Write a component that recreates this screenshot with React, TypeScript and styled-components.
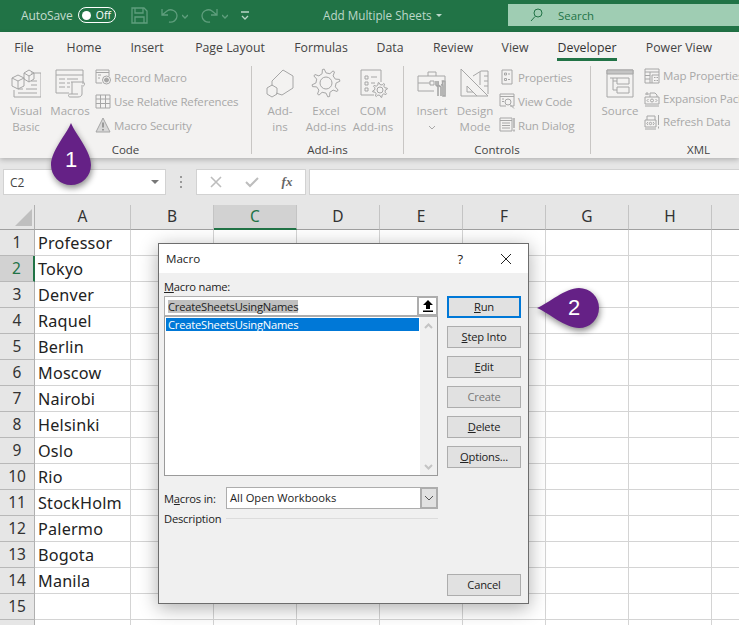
import React from 'react';
import styled, { createGlobalStyle } from 'styled-components';

const Global = createGlobalStyle`
  html, body { margin: 0; padding: 0; width: 739px; height: 625px; overflow: hidden; background: #fff; }
  * { box-sizing: border-box; }
`;
const UI = `"Open Sans", "Noto Sans", sans-serif`;
const GREEN = '#217346';

const Page = styled.div`position: relative; width: 739px; height: 625px; overflow: hidden; background: #fff; font-family: ${UI};`;

/* title bar */
const TitleBar = styled.div`height: 32px; background: ${GREEN}; display: flex; align-items: center; padding: 0 0 2px 21px;`;
const AutoSave = styled.span`font-size: 12px; color: #c3dccf; width: 57px; flex: none; white-space: nowrap; letter-spacing: -.1px;`;
const Toggle = styled.div`width: 38px; height: 16px; flex: none; border: 1.5px solid #fff; border-radius: 8px; display: flex; align-items: center; padding: 0 4px 0 3px; justify-content: space-between; margin-right: 15px;`;
const ToggleDot = styled.i`width: 9px; height: 9px; border-radius: 50%; background: #fff;`;
const ToggleText = styled.span`font-size: 10.5px; color: #fff;`;
const QuickIcon = styled.svg<{ $ml?: number }>`margin-left: ${p => p.$ml ?? 0}px; flex: none; fill: none; stroke: #5f9e7d; stroke-width: 1.3;`;
const DocTitle = styled.span`margin-left: 74px; width: 107px; flex: none; white-space: nowrap; font-size: 11.7px; color: #bcd8c9;`;
const SearchBox = styled.div`margin-left: 66px; width: 240px; height: 22px; background: #9fcdb3; display: flex; align-items: center; padding-left: 22px; flex: none;`;
const SearchText = styled.span`margin-left: 15px; font-size: 11.4px; color: ${GREEN};`;

/* ribbon */
const Ribbon = styled.div`position: relative; z-index: 2; background: #f3f2f1; box-shadow: 0 2px 5px rgba(0,0,0,.22); height: 126px;`;
const Tabs = styled.div`display: flex; height: 32px;`;
const Tab = styled.div<{ $w: number }>`width: ${p => p.$w}px; flex: none; text-align: center; padding-top: 7px; font-size: 12.3px; color: #444;`;
const TabLabel = styled.span<{ $on?: boolean }>`display: inline-block; line-height: 16px; padding: 0 1px 2px; border-bottom: 3px solid ${p => p.$on ? GREEN : 'transparent'}; color: ${p => p.$on ? '#333' : '#444'};`;
const RibbonBody = styled.div`display: flex; height: 94px; overflow: hidden;`;
const Group = styled.div<{ $w: number }>`width: ${p => p.$w}px; flex: none; height: 88px; margin-top: 2px; border-right: 1px solid #c8c6c4; display: flex; flex-direction: column;`;
const GroupBody = styled.div<{ $pl: number }>`height: 76px; display: flex; padding-left: ${p => p.$pl}px;`;
const GroupLabel = styled.div`font-size: 11.5px; line-height: 16px; height: 16px; margin-bottom: -4px; text-align: center; color: #444;`;
const Large = styled.div<{ $w: number }>`width: ${p => p.$w}px; flex: none; display: flex; flex-direction: column; align-items: center; font-size: 11.5px; line-height: 16px; color: #a8a8a8; text-align: center;`;
const LargeIcon = styled.div`height: 37px; padding-top: 2px;`;
const Chevron = styled.svg`fill: none; stroke: #a8a8a8; stroke-width: 1;`;
const SmallCol = styled.div<{ $ml: number; $tight?: boolean }>`margin-left: ${p => p.$ml}px; margin-top: ${p => p.$tight ? -2 : -1}px; display: flex; flex-direction: column;`;
const SmallRow = styled.div<{ $tight?: boolean }>`height: ${p => p.$tight ? 23 : 24}px; display: flex; align-items: center; gap: 3px; font-size: 11.5px; letter-spacing: -.15px; color: #a8a8a8; white-space: nowrap;`;
const Ic = styled.svg`flex: none; display: block; fill: none; stroke: #a6a6a6; stroke-width: 1;`;

/* formula bar */
const FormulaBar = styled.div`height: 47px; background: #e6e6e6; display: flex; padding: 11px 0 0 3px;`;
const NameBox = styled.div`width: 163px; height: 26px; background: #fff; border: 1px solid #d2d2d2; display: flex; align-items: center; justify-content: space-between; padding: 0 6px; font-size: 12px; color: #444; font-family: ${UI};`;
const Arrow = styled.i`width: 0; height: 0; border-left: 4px solid transparent; border-right: 4px solid transparent; border-top: 4px solid #777;`;
const Dots = styled.div`width: 30px; display: flex; flex-direction: column; align-items: center; justify-content: center; gap: 3px; height: 26px;`;
const Dot = styled.i`width: 2px; height: 2px; background: #999;`;
const FxBox = styled.div`width: 110px; height: 26px; background: #fff; border: 1px solid #d2d2d2; display: flex; align-items: center; justify-content: space-around; padding: 0 1px; margin-right: 3px;`;
const FxText = styled.span`font-family: "Liberation Serif", serif; font-style: italic; font-weight: bold; font-size: 13px; color: #666;`;
const FormulaInput = styled.div`flex: 1; height: 26px; background: #fff; border: 1px solid #d2d2d2; border-right: none;`;

/* sheet */
const Sheet = styled.div`display: grid; grid-template-columns: 35px 96px repeat(8, 83px); grid-auto-rows: 26px; font-family: "Noto Sans", sans-serif;`;
const Corner = styled.div`height: 25px; background: #e6e6e6; border-right: 1px solid #b0b0b0; border-bottom: 1px solid #a0a0a0; padding: 4px 0 0 15px;`;
const ColHead = styled.div<{ $on?: boolean }>`height: 25px; background: ${p => p.$on ? '#d2d2d2' : '#e6e6e6'}; border-right: 1px solid #c4c4c4; border-bottom: ${p => p.$on ? `2px solid ${GREEN}` : '1px solid #a0a0a0'}; text-align: center; font-size: 15.5px; line-height: 23px; color: ${p => p.$on ? GREEN : '#333'};`;
const RowHead = styled.div<{ $on?: boolean }>`margin-top: -1px; height: 26px; background: ${p => p.$on ? '#d2d2d2' : '#e6e6e6'}; border-right: ${p => p.$on ? `2px solid ${GREEN}` : '1px solid #b0b0b0'}; border-bottom: 1px solid #b8b8b8; text-align: center; font-size: 15.5px; line-height: 25px; color: ${p => p.$on ? GREEN : '#333'};`;
const Cell = styled.div`margin-top: -1px; height: 26px; background: #fff; border-right: 1px solid #d4d4d4; border-bottom: 1px solid #d4d4d4; padding-left: 3px; font-size: 16.2px; letter-spacing: .2px; line-height: 26px; color: #222; white-space: nowrap; overflow: hidden;`;

/* dialog */
const Dialog = styled.div`position: absolute; z-index: 3; left: 158px; top: 243px; width: 371px; height: 361px; border: 1px solid #6d6d6d; background: #f0f0f0; box-shadow: 0 4px 18px rgba(0,0,0,.32); display: flex; flex-direction: column; font-size: 11.2px; letter-spacing: -.22px; color: #222;`;
const DialogTitle = styled.div`height: 29px; background: #fff; display: flex; align-items: center; padding: 0 16px 0 7px; flex: none;`;
const DialogName = styled.span`flex: 1; font-size: 11.6px; letter-spacing: 0;`;
const Help = styled.span`font-size: 13px; margin-right: 37px;`;
const DialogBody = styled.div`flex: 1; display: grid; grid-template-columns: 274px 74px; column-gap: 9px; padding: 7px 0 7px 5px;`;
const LeftCol = styled.div`display: flex; flex-direction: column;`;
const FieldLabel = styled.div`height: 16px; line-height: 14px;`;
const NameField = styled.div`height: 20px; background: #fff; border: 1px solid #adadad; display: flex; align-items: center; justify-content: space-between; padding-left: 3px;`;
const Selected = styled.span`background: #c0c0c0; line-height: 13px; white-space: nowrap;`;
const UpButton = styled.div`width: 21px; height: 20px; margin-right: -1px; border: 2px solid #adadad; background: #fff; display: flex; align-items: center; justify-content: center;`;
const MacroList = styled.div`height: 160px; background: #fff; border: 1px solid #9a9a9a; border-top-color: #adadad; display: flex; justify-content: space-between;`;
const ListItems = styled.div`flex: 1; padding: 1px;`;
const ListItem = styled.div`background: #0078d7; color: #fff; height: 13px; line-height: 13px; padding-left: 2px; width: 253px; white-space: nowrap;`;
const ListScroll = styled.div`width: 17px; background: #f0f0f0; display: flex; flex-direction: column; justify-content: space-between; align-items: center; padding: 6px 0 5px;`;
const ScrollArrow = styled.svg`fill: none; stroke: #c4c4c4; stroke-width: 2;`;
const MacrosRow = styled.div`margin-top: 11px; display: flex; align-items: center; justify-content: space-between;`;
const MacrosLabel = styled.span`white-space: nowrap; flex: none;`;
const SelectBox = styled.div`width: 212px; flex: none; height: 22px; background: #fff; border: 1px solid #adadad; display: flex; align-items: center; justify-content: space-between; padding-left: 3px;`;
const SelectText = styled.span`letter-spacing: 0; padding-bottom: 2px; white-space: nowrap;`;
const SelectButton = styled.div`width: 18px; height: 22px; margin-right: -1px; background: #e1e1e1; border: 2px solid #adadad; display: flex; align-items: center; justify-content: center;`;
const DescRow = styled.div`margin-top: 2px; display: flex; align-items: center; gap: 5px; line-height: 16px;`;
const DescLine = styled.i`flex: 1; height: 1px; background: #dcdcdc; margin-top: -2px;`;
const RightCol = styled.div`padding-top: 16px; display: flex; flex-direction: column; gap: 8px;`;
const Btn = styled.div<{ $primary?: boolean; $off?: boolean; $end?: boolean }>`height: 22px; flex: none; padding-bottom: 1px; background: #e1e1e1; border: ${p => p.$primary ? '2px solid #0078d7' : '1px solid #adadad'}; color: ${p => p.$off ? '#777' : '#222'}; display: flex; align-items: center; justify-content: center; white-space: pre; margin-top: ${p => p.$end ? 'auto' : '0'};`;

/* callouts */
const Callout = styled.div<{ $x: number; $y: number; $w: number; $h: number }>`position: absolute; z-index: 4; left: ${p => p.$x}px; top: ${p => p.$y}px; width: ${p => p.$w}px; height: ${p => p.$h}px; display: flex; align-items: flex-end; justify-content: center;`;
const CalloutShape = styled.svg`position: absolute; inset: 0; overflow: visible; filter: drop-shadow(1px 3px 3px rgba(0,0,0,.45));`;
const CalloutNum = styled.span<{ $dx: number; $dy: number }>`position: absolute; left: ${p => p.$dx}px; top: ${p => p.$dy}px; width: 24px; text-align: center; color: #fff; font: 22px/26px "Liberation Sans", sans-serif;`;

const S = ({ children }: { children: React.ReactNode }) => <Ic width="16" height="16" viewBox="0 0 16 16">{children}</Ic>;
const L = ({ children }: { children: React.ReactNode }) => <Ic width="30" height="30" viewBox="0 0 30 30">{children}</Ic>;

const gear = (cx: number, cy: number, r: number) => {
  const pts: string[] = [];
  for (let i = 0; i < 8; i++) {
    const a = (i * Math.PI) / 4 - Math.PI / 8;
    const b = a + Math.PI / 4;
    const R = r, q = r * 0.72;
    const p = (rad: number, ang: number) => `${(cx + rad * Math.cos(ang)).toFixed(1)} ${(cy + rad * Math.sin(ang)).toFixed(1)}`;
    pts.push(`${i ? 'L' : 'M'}${p(q, a)} L${p(R, a + 0.13)} L${p(R, b - 0.13 - Math.PI / 8)} L${p(q, a + Math.PI / 8)}`);
  }
  return pts.join(' ') + ' Z';
};

const VisualBasicIcon = () => <L>
  <path d="M20 5H30V29H3V22M7 21H12M15 21H26M7 25H26M20 13H26M20 17H26" />
  <path d="M1 10L7 7L13 10V18L7 21L1 18ZM1 10L7 13L13 10M7 13V21" />
  <path d="M13 5L18 2L23 5V11L18 14L13 11ZM13 5L18 8L23 5M18 8V14" />
</L>;
const MacrosIcon = () => <L>
  <path d="M1 2H28V16M1 2V25H14M1 7H28M4 11H10M12 11H23M4 15H10M12 15H15M4 19H10M12 19H15" />
  <path d="M16 14H28C30 14 30 18 28 18M17 14V26M27 17V26C27 28 25 29 23 29H15C13 29 13 26 15 26H23" />
</L>;
const AddInsIcon = () => <L>
  <path d="M7 13L18 2L28 8V20L17 27L11 25M7 13V18" fill="#f3f2f1" />
  <path d="M7 17L12 20V26L7 29L2 26V20Z" />
</L>;
const GearIcon = () => <L>
  <path d={gear(15, 15, 14)} />
  <circle cx="15" cy="15" r="6" />
</L>;
const ComIcon = () => <L>
  <path d="M16 27H3V2H23V14M7 8H10V11H7ZM7 14H10V17H7ZM7 20H10V23H7ZM13 9H19M13 15H17" />
  <path d={gear(22, 22, 7.5)} />
  <circle cx="22" cy="22" r="3" />
</L>;
const InsertIcon = () => <L>
  <path d="M1 8H28V12M1 8V23H17M1 15H13M21 15H22M11 8V4H19V8M13 13H17V17H13Z" />
  <path d="M21 13V17L24 19V28M21 28V19L19 17V13M24 17C26 17 26 14 26 13M28 13V28H26V18L25.500 13Z" strokeWidth="1.6" />
</L>;
const DesignIcon = () => <L>
  <path d="M1 1L28 28H1ZM7 18L17 28M7 18V24H13" />
  <path d="M13 8L21 3H28V26M20 4V17M24 8H28M24 13H28M24 18H28" />
</L>;
const SourceIcon = () => <L>
  <path d="M2 2H28V29H2Z" />
  <path d="M2 2H28V6H2Z" fill="#c4c4c4" />
  <path d="M12 10H24V16H12ZM12 19H24V25H12ZM8 10V22H12M8 13H12M5 10H12" />
</L>;
const RecordIcon = () => <S>
  <path d="M1 1H14V7M1 1V14H7M1 3.500H14M3 6H6M3 9H5" />
  <circle cx="11.500" cy="11" r="4" /><circle cx="11.500" cy="11" r="2" fill="#a6a6a6" />
</S>;
const GridIcon = () => <S><path d="M1 2H15V15H1ZM1 6H15M1 10.500H15M5.500 2V15M10.500 2V15" /></S>;
const WarnIcon = () => <S><path d="M8 1L15 15H1Z" fill="#d8d8d8" /><path d="M8 5.500V10.500M8 12V13.500" strokeWidth="1.6" stroke="#8a8a8a" /></S>;
const PropsIcon = () => <S><path d="M3 1H13V15H3ZM5.500 4H7.500V6H5.500ZM5.500 9.500H7.500V11.500H5.500ZM9 5H11M9 10.500H11" /></S>;
const ViewCodeIcon = () => <S><path d="M1 1H15V13H11M1 1V13H7M1 3.500H15M3 6H5M3 8.500H5" /><circle cx="9" cy="9" r="3" /><path d="M11 11.500L15 15.500" /></S>;
const RunIcon = () => <S><path d="M1 1H13V14H1ZM1 3.500H13M3 6H11M3 8.500H11M3 11H11" /><path d="M15 1V11M15 12.500V14.500" strokeWidth="1.4" /></S>;
const MapIcon = () => <S><path d="M1 1H15V7M1 1V15H8M1 4H15M6 4V15M1 7.500H6M1 11H6" /><path d="M8 7H15V15H8ZM10 9.500H11.500M10 12.500H11.500M12.500 9.500H14M12.500 12.500H14" /></S>;
const ExpansionIcon = () => <S><path d="M1 6H15V13H1ZM1 15H15M6 6V2H11L13 4V6M3 1V4M1 3H5" /><path d="M4.500 8L3 9.500L4.500 11M11.500 8L13 9.500L11.500 11" /><circle cx="8" cy="9.500" r="1.500" /></S>;
const RefreshIcon = () => <S><path d="M1 6H12V13H1ZM1 15H12M3 6V2H11V6M14.500 1V11M14.500 12.500V14.500" /><path d="M4 8L2.800 9.500L4 11M9 8L10.200 9.500L9 11" /><circle cx="6.500" cy="9.500" r="1.200" /></S>;

const columns = ['A', 'B', 'C', 'D', 'E', 'F', 'G', 'H', ''];
const names = ['Professor', 'Tokyo', 'Denver', 'Raquel', 'Berlin', 'Moscow', 'Nairobi', 'Helsinki', 'Oslo', 'Rio', 'StockHolm', 'Palermo', 'Bogota', 'Manila', '', ''];
const tabs: [string, number][] = [['File', 48], ['Home', 72], ['Insert', 54], ['Page Layout', 112], ['Formulas', 70], ['Data', 68], ['Review', 58], ['View', 66], ['Developer', 78], ['Power View', 106]];

export default function App() {
  return (
    <Page>
      <Global />
      <TitleBar>
        <AutoSave>AutoSave</AutoSave>
        <Toggle><ToggleDot /><ToggleText>Off</ToggleText></Toggle>
        <QuickIcon width="17" height="17" viewBox="0 0 17 17"><path d="M1 1H13L16 4V16H1ZM4 1V6H12V1M4 16V10H13V16" /></QuickIcon>
        <QuickIcon $ml={13} width="17" height="17" viewBox="0 0 17 17"><path d="M1 2V8H7M1 8L6 4C10 1 16 4 16 9C16 13 12 16 8 15" /></QuickIcon>
        <QuickIcon $ml={4} width="6" height="17" viewBox="0 0 6 17"><path d="M0 8L3 11L6 8" /></QuickIcon>
        <QuickIcon $ml={13} width="17" height="17" viewBox="0 0 17 17"><path d="M16 2V8H10M16 8L11 4C7 1 1 4 1 9C1 13 5 16 9 15" /></QuickIcon>
        <QuickIcon $ml={4} width="6" height="17" viewBox="0 0 6 17"><path d="M0 8L3 11L6 8" /></QuickIcon>
        <QuickIcon $ml={13} width="8" height="17" viewBox="0 0 8 17"><path d="M0 5H8M1 9L4 12L7 9" stroke="#b9d6c7" /></QuickIcon>
        <DocTitle>Add Multiple Sheets</DocTitle>
        <QuickIcon $ml={6} width="6" height="17" viewBox="0 0 6 17"><path d="M0 7L6 7L3 10Z" fill="#bcd8c9" stroke="none" /></QuickIcon>
        <SearchBox>
          <Ic width="13" height="14" viewBox="0 0 13 14" style={{ stroke: GREEN }}><circle cx="8" cy="5" r="4" /><path d="M5 8.500L1 13" /></Ic>
          <SearchText>Search</SearchText>
        </SearchBox>
      </TitleBar>

      <Ribbon>
        <Tabs>
          {tabs.map(([t, w]) => <Tab key={t} $w={w}><TabLabel $on={t === 'Developer'}>{t}</TabLabel></Tab>)}
        </Tabs>
        <RibbonBody>
          <Group $w={252}>
            <GroupBody $pl={6}>
              <Large $w={40}><LargeIcon><VisualBasicIcon /></LargeIcon>Visual<br />Basic</Large>
              <Large $w={48}><LargeIcon><MacrosIcon /></LargeIcon>Macros</Large>
              <SmallCol $ml={1}>
                <SmallRow><RecordIcon />Record Macro</SmallRow>
                <SmallRow><GridIcon />Use Relative References</SmallRow>
                <SmallRow><WarnIcon />Macro Security</SmallRow>
              </SmallCol>
            </GroupBody>
            <GroupLabel>Code</GroupLabel>
          </Group>
          <Group $w={152}>
            <GroupBody $pl={4}>
              <Large $w={48}><LargeIcon><AddInsIcon /></LargeIcon>Add-<br />ins</Large>
              <Large $w={44}><LargeIcon><GearIcon /></LargeIcon>Excel<br />Add-ins</Large>
              <Large $w={50}><LargeIcon><ComIcon /></LargeIcon>COM<br />Add-ins</Large>
            </GroupBody>
            <GroupLabel>Add-ins</GroupLabel>
          </Group>
          <Group $w={187}>
            <GroupBody $pl={8}>
              <Large $w={40}><LargeIcon><InsertIcon /></LargeIcon>Insert<Chevron width="8" height="16" viewBox="0 0 8 16"><path d="M1 7L4 10L7 7" /></Chevron></Large>
              <Large $w={46}><LargeIcon><DesignIcon /></LargeIcon>Design<br />Mode</Large>
              <SmallCol $ml={1}>
                <SmallRow><PropsIcon />Properties</SmallRow>
                <SmallRow><ViewCodeIcon />View Code</SmallRow>
                <SmallRow><RunIcon />Run Dialog</SmallRow>
              </SmallCol>
            </GroupBody>
            <GroupLabel>Controls</GroupLabel>
          </Group>
          <Group $w={216}>
            <GroupBody $pl={9}>
              <Large $w={40}><LargeIcon><SourceIcon /></LargeIcon>Source</Large>
              <SmallCol $ml={4} $tight>
                <SmallRow $tight><MapIcon />Map Properties</SmallRow>
                <SmallRow $tight><ExpansionIcon />Expansion Packs</SmallRow>
                <SmallRow $tight><RefreshIcon />Refresh Data</SmallRow>
              </SmallCol>
            </GroupBody>
            <GroupLabel>XML</GroupLabel>
          </Group>
        </RibbonBody>
      </Ribbon>

      <FormulaBar>
        <NameBox>C2<Arrow /></NameBox>
        <Dots><Dot /><Dot /><Dot /></Dots>
        <FxBox>
          <Ic width="12" height="12" viewBox="0 0 12 12" style={{ stroke: '#bdbdbd', strokeWidth: 1.6 }}><path d="M1 1L11 11M11 1L1 11" /></Ic>
          <Ic width="14" height="12" viewBox="0 0 14 12" style={{ stroke: '#bdbdbd', strokeWidth: 2 }}><path d="M1 6L5 10L13 2" /></Ic>
          <FxText>fx</FxText>
        </FxBox>
        <FormulaInput />
      </FormulaBar>

      <Sheet>
        <Corner><svg width="17" height="17" viewBox="0 0 17 17"><path d="M17 0V17H0Z" fill="#bfbfbf" /></svg></Corner>
        {columns.map((c, i) => <ColHead key={i} $on={c === 'C'}>{c}</ColHead>)}
        {names.map((n, i) => (
          <React.Fragment key={i}>
            <RowHead $on={i === 1}>{i < 15 ? i + 1 : ''}</RowHead>
            <Cell>{n}</Cell>
            {columns.slice(1).map((_, j) => <Cell key={j} />)}
          </React.Fragment>
        ))}
      </Sheet>

      <Dialog>
        <DialogTitle>
          <DialogName>Macro</DialogName>
          <Help>?</Help>
          <Ic width="12" height="12" viewBox="0 0 12 12" style={{ stroke: '#222' }}><path d="M1 1L11 11M11 1L1 11" /></Ic>
        </DialogTitle>
        <DialogBody>
          <LeftCol>
            <FieldLabel><u>M</u>acro name:</FieldLabel>
            <NameField>
              <Selected>CreateSheetsUsingNames</Selected>
              <UpButton><svg width="10" height="12" viewBox="0 0 10 12"><path d="M5 0L10 5H7V9H3V5H0ZM0 10.500H10V12H0Z" fill="#000" /></svg></UpButton>
            </NameField>
            <MacroList>
              <ListItems><ListItem>CreateSheetsUsingNames</ListItem></ListItems>
              <ListScroll>
                <ScrollArrow width="9" height="6" viewBox="0 0 9 6"><path d="M1 5L4.500 1.500L8 5" /></ScrollArrow>
                <ScrollArrow width="9" height="6" viewBox="0 0 9 6"><path d="M1 1L4.500 4.500L8 1" /></ScrollArrow>
              </ListScroll>
            </MacroList>
            <MacrosRow>
              <MacrosLabel>M<u>a</u>cros in:</MacrosLabel>
              <SelectBox>
                <SelectText>All Open Workbooks</SelectText>
                <SelectButton><svg width="10" height="6" viewBox="0 0 10 6"><path d="M1 1L5 5L9 1" fill="none" stroke="#555" /></svg></SelectButton>
              </SelectBox>
            </MacrosRow>
            <DescRow>Description<DescLine /></DescRow>
          </LeftCol>
          <RightCol>
            <Btn $primary><span><u>R</u>un</span></Btn>
            <Btn><span><u>S</u>tep Into</span></Btn>
            <Btn><span><u>E</u>dit</span></Btn>
            <Btn $off>Create</Btn>
            <Btn><span><u>D</u>elete</span></Btn>
            <Btn><span><u>O</u>ptions...</span></Btn>
            <Btn $end>Cancel</Btn>
          </RightCol>
        </DialogBody>
      </Dialog>

      <Callout $x={51} $y={123} $w={40} $h={62}>
        <CalloutShape width="40" height="62" viewBox="0 0 40 62"><path d="M20 0C25 12 40 28 40 42A20 20 0 0 1 0 42C0 28 15 12 20 0Z" fill="#652186" /></CalloutShape>
        <CalloutNum $dx={8} $dy={24}>1</CalloutNum>
      </Callout>
      <Callout $x={537} $y={288} $w={62} $h={40}>
        <CalloutShape width="62" height="40" viewBox="0 0 62 40"><path d="M0 20C12 15 28 0 42 0A20 20 0 0 1 42 40C28 40 12 25 0 20Z" fill="#652186" /></CalloutShape>
        <CalloutNum $dx={25} $dy={7}>2</CalloutNum>
      </Callout>
    </Page>
  );
}
